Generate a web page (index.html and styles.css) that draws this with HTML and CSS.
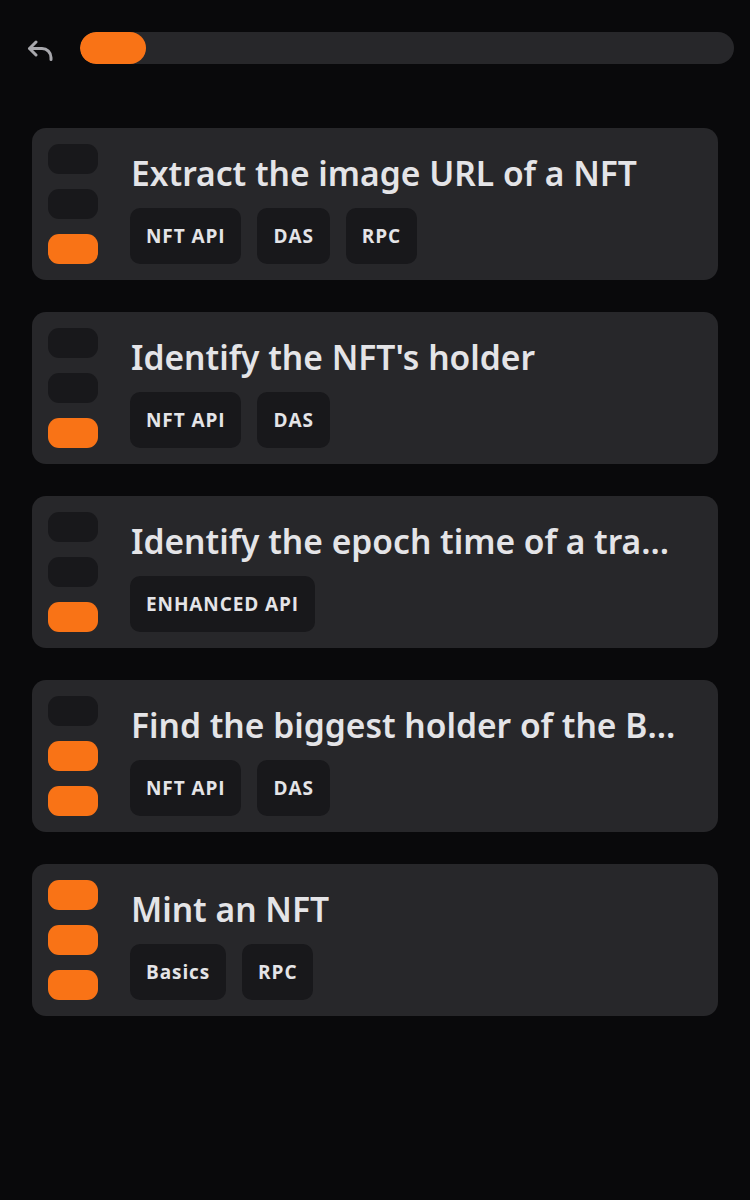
FILE: index.html
```html
<!DOCTYPE html>
<html>
<head>
<meta charset="utf-8">
<link rel="stylesheet" href="styles.css">
</head>
<body>
<div class="page">
  <header class="top">
    <button class="back" aria-label="Back">
      <svg width="28" height="22" viewBox="0 0 28 22" fill="none" stroke="currentColor" stroke-width="3" stroke-linecap="round" stroke-linejoin="round"><path d="M9 2 2.5 8.5 9 15"/><path d="M3 8.5h12a9 9 0 0 1 9 9v2"/></svg>
    </button>
    <div class="progress"><div class="progress-fill" style="width:66px"></div></div>
  </header>

  <main class="list">
    <div class="card">
      <div class="levels"><span class="lv"></span><span class="lv"></span><span class="lv on"></span></div>
      <div class="body">
        <div class="title">Extract the image URL of a NFT</div>
        <div class="tags"><span class="tag">NFT API</span><span class="tag">DAS</span><span class="tag">RPC</span></div>
      </div>
    </div>
    <div class="card">
      <div class="levels"><span class="lv"></span><span class="lv"></span><span class="lv on"></span></div>
      <div class="body">
        <div class="title">Identify the NFT's holder</div>
        <div class="tags"><span class="tag">NFT API</span><span class="tag">DAS</span></div>
      </div>
    </div>
    <div class="card">
      <div class="levels"><span class="lv"></span><span class="lv"></span><span class="lv on"></span></div>
      <div class="body">
        <div class="title">Identify the epoch time of a transaction</div>
        <div class="tags"><span class="tag">ENHANCED API</span></div>
      </div>
    </div>
    <div class="card">
      <div class="levels"><span class="lv"></span><span class="lv on"></span><span class="lv on"></span></div>
      <div class="body">
        <div class="title">Find the biggest holder of the BONK token</div>
        <div class="tags"><span class="tag">NFT API</span><span class="tag">DAS</span></div>
      </div>
    </div>
    <div class="card">
      <div class="levels"><span class="lv on"></span><span class="lv on"></span><span class="lv on"></span></div>
      <div class="body">
        <div class="title">Mint an NFT</div>
        <div class="tags"><span class="tag">Basics</span><span class="tag">RPC</span></div>
      </div>
    </div>
  </main>
</div>
</body>
</html>
```

FILE: styles.css
```css
* { box-sizing: border-box; }
html, body { margin: 0; padding: 0; }
body {
  background: #09090b;
  font-family: "Noto Sans", "Open Sans", sans-serif;
  color: #e4e4e7;
  width: 750px;
  min-height: 1200px;
}
.page { padding: 32px 16px 0 24px; }
.top {
  display: flex;
  align-items: center;
  gap: 24px;
  height: 32px;
}
.back {
  background: none;
  border: none;
  padding: 0 0 0 1px;
  width: 32px;
  height: 32px;
  display: flex;
  align-items: center;
  justify-content: center;
  color: #a8a8ad;
}
.back svg { margin-top: 5px; }
.progress {
  flex: 1;
  height: 32px;
  border-radius: 16px;
  background: #27272a;
  overflow: hidden;
}
.progress-fill {
  height: 100%;
  background: #f97316;
  border-radius: 16px;
}
.list {
  margin-top: 64px;
  padding-left: 8px;
  padding-right: 16px;
  display: flex;
  flex-direction: column;
  gap: 32px;
}
.card {
  background: #27272a;
  border-radius: 14px;
  padding: 16px 36px 16px 16px;
  display: flex;
  gap: 32px;
  height: 152px;
}
.levels {
  display: flex;
  flex-direction: column;
  gap: 15px;
  width: 50px;
  flex-shrink: 0;
}
.lv {
  height: 30px;
  border-radius: 11px;
  background: #18181b;
}
.lv.on { background: #f97316; }
.body {
  flex: 1;
  min-width: 0;
  display: flex;
  flex-direction: column;
  justify-content: space-between;
}
.title {
  font-size: 33.6px;
  font-weight: 600;
  line-height: 58px;
  white-space: nowrap;
  overflow: hidden;
  text-overflow: ellipsis;
  color: #e4e4e7;
  padding-left: 1px;
}
.tags { display: flex; gap: 16px; }
.tag {
  background: #18181b;
  border-radius: 10px;
  height: 56px;
  padding: 0 16px;
  display: flex;
  align-items: center;
  font-family: "Open Sans", "Noto Sans", sans-serif;
  font-size: 19px;
  font-weight: 700;
  letter-spacing: 0.9px;
  color: #e4e4e7;
}
```
